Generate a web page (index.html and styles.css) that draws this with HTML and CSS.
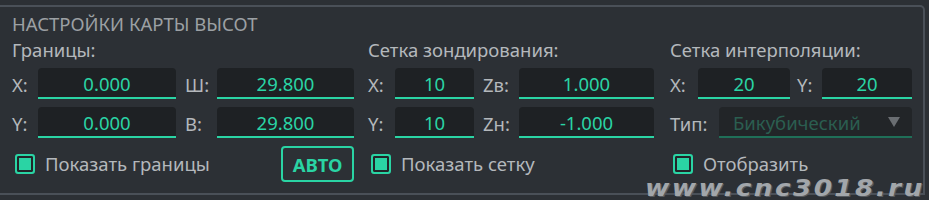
FILE: index.html
```html
<!DOCTYPE html>
<html lang="ru">
<head>
<meta charset="utf-8">
<link rel="stylesheet" href="styles.css">
</head>
<body>
<div class="panel">
  <div class="title">НАСТРОЙКИ КАРТЫ ВЫСОТ</div>
  <div class="cols">
    <div class="col col1">
      <div class="head">Границы:</div>
      <div class="row">
        <span class="lbl w26">X:</span><span class="inp w138">0.000</span>
        <span class="lbl w32 ml9">Ш:</span><span class="inp w137">29.800</span>
      </div>
      <div class="row">
        <span class="lbl w26">Y:</span><span class="inp w138">0.000</span>
        <span class="lbl w32 ml9">В:</span><span class="inp w137">29.800</span>
      </div>
      <div class="row last">
        <span class="check"><span class="box"></span>Показать границы</span>
        <span class="btn">АВТО</span>
      </div>
    </div>
    <div class="col col2">
      <div class="head">Сетка зондирования:</div>
      <div class="row">
        <span class="lbl w27">X:</span><span class="inp w79">10</span>
        <span class="lbl w36 ml9">Zв:</span><span class="inp w135">1.000</span>
      </div>
      <div class="row">
        <span class="lbl w27">Y:</span><span class="inp w79">10</span>
        <span class="lbl w36 ml9">Zн:</span><span class="inp w135">-1.000</span>
      </div>
      <div class="row last">
        <span class="check ml4"><span class="box"></span>Показать сетку</span>
      </div>
    </div>
    <div class="col col3">
      <div class="head">Сетка интерполяции:</div>
      <div class="row">
        <span class="lbl w28">X:</span><span class="inp w92">20</span>
        <span class="lbl w25 ml7">Y:</span><span class="inp w90">20</span>
      </div>
      <div class="row">
        <span class="lbl w49">Тип:</span>
        <span class="select"><span class="sel-text">Бикубический</span><span class="arrow"></span></span>
      </div>
      <div class="row last">
        <span class="check ml5"><span class="box"></span>Отобразить</span>
      </div>
    </div>
  </div>
</div>
<div class="watermark">www.cnc3018.ru</div>
</body>
</html>
```
FILE: styles.css
```css
html, body {
  margin: 0;
  padding: 0;
  background: #2c3035;
  width: 929px;
  height: 200px;
  overflow: hidden;
  font-family: "Noto Sans", "Open Sans", sans-serif;
  position: relative;
}

.panel {
  margin-top: 5px;
  width: 923px;
  height: 186px;
  border: 2px solid #4a5058;
  border-left: 0;
  border-top-right-radius: 5px;
  box-sizing: content-box;
}

.title {
  margin: 5px 0 0 12px;
  font-size: 18.5px;
  line-height: 24px;
  color: #9ca0a4;
  height: 24px;
}

.cols {
  display: flex;
  margin-top: 0;
}

.col1 { margin-left: 12px; width: 343px; }
.col2 { margin-left: 13px; width: 286px; }
.col3 { margin-left: 16px; width: 242px; }

.head {
  font-size: 18.5px;
  line-height: 24px;
  height: 24px;
  color: #b4b8bc;
  margin-top: 2px;
}

.row {
  display: flex;
  align-items: stretch;
  height: 31px;
  margin-top: 8px;
}
.head + .row { margin-top: 6px; }

.lbl {
  font-size: 18.5px;
  color: #b4b8bc;
  display: flex;
  align-items: center;
  padding-top: 2px;
  box-sizing: border-box;
}

.inp {
  background: #1e2124;
  border-bottom: 2px solid #2ad4a4;
  border-radius: 4px 4px 0 0;
  color: #2ad4a4;
  font-size: 18.5px;
  display: flex;
  align-items: center;
  justify-content: center;
  box-sizing: border-box;
  padding-top: 1px;
}

.w25 { width: 25px; }
.w26 { width: 26px; }
.w27 { width: 27px; }
.w28 { width: 28px; }
.w32 { width: 32px; }
.w36 { width: 36px; }
.w49 { width: 49px; }
.w79 { width: 79px; }
.w90 { width: 90px; }
.w92 { width: 92px; }
.w135 { width: 135px; }
.w137 { width: 137px; }
.w138 { width: 138px; }
.ml4 { margin-left: 4px; }
.ml5 { margin-left: 5px; }
.ml7 { margin-left: 7px; }
.ml9 { margin-left: 9px; }

.select {
  width: 193px;
  background: #222528;
  border-bottom: 2px solid #1f6f58;
  border-radius: 4px 4px 0 0;
  box-sizing: border-box;
  display: flex;
  align-items: center;
  justify-content: space-between;
  padding: 1px 12px 0 14px;
}
.sel-text {
  color: #2b5e50;
  font-size: 18.5px;
}
.arrow {
  width: 0;
  height: 0;
  border-left: 6px solid transparent;
  border-right: 6px solid transparent;
  border-top: 10px solid #6a6e72;
}

.row.last {
  height: 36px;
  margin-top: 8px;
  align-items: center;
  justify-content: space-between;
}

.check {
  display: flex;
  align-items: center;
  font-size: 18.5px;
  line-height: 22px;
  color: #b4b8bc;
  margin-left: 3px;
}
.box {
  width: 20px;
  height: 20px;
  border: 2px solid #2ad4a4;
  border-radius: 3px;
  box-sizing: border-box;
  background: #2ad4a4;
  box-shadow: inset 0 0 0 2px #23262a;
  margin-right: 10px;
}

.btn {
  width: 73px;
  height: 36px;
  border: 2px solid #2ad4a4;
  border-radius: 4px;
  box-sizing: border-box;
  color: #2ad4a4;
  font-weight: bold;
  font-size: 18.5px;
  display: flex;
  align-items: center;
  justify-content: center;
  margin-right: 1px;
}

.watermark {
  position: absolute;
  left: 645px;
  top: 177px;
  font-family: "DejaVu Sans", sans-serif;
  font-weight: bold;
  font-style: italic;
  font-size: 23px;
  line-height: 22px;
  height: 22px;
  letter-spacing: 2px;
  color: #a2a6aa;
  text-shadow: 1px 1px 0 #55595e;
  transform: scaleX(1.15);
  transform-origin: left top;
}
```
